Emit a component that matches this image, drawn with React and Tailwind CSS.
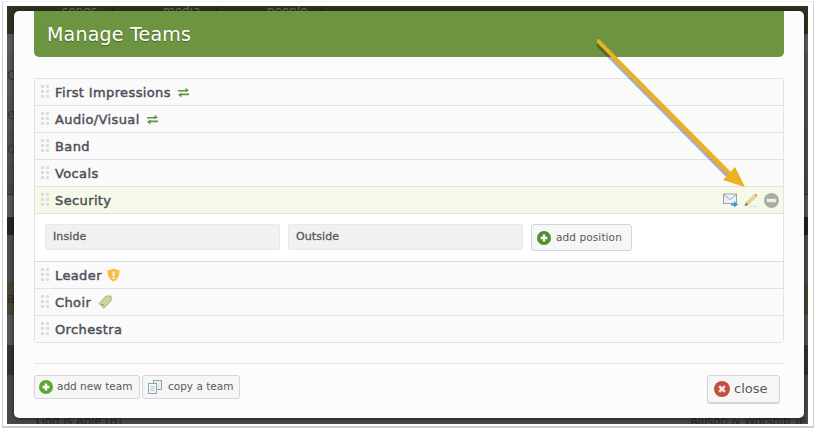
import React from "react";

const font = { fontFamily: '"DejaVu Sans", sans-serif' };

function Grip() {
  return (
    <svg width="8" height="14" viewBox="0 0 8 14" className="shrink-0">
      {[0, 5, 10].map((y) => (
        <g key={y} fill="#dcdfe1">
          <rect x="0" y={y} width="3" height="3" />
          <rect x="5" y={y} width="3" height="3" />
        </g>
      ))}
    </svg>
  );
}

function Swap() {
  return (
    <svg width="11" height="11" viewBox="0 0 11 11" fill="none" className="ml-[7px]">
      <path d="M0 3h7.5V0.8L11 3.6 7.5 5.2V4.6H0Z" fill="#5f9440" />
      <path d="M11 6.6H3.5V5.4L0 7.8l3.5 2.6V8.2H11Z" fill="#5f9440" />
    </svg>
  );
}

function Shield() {
  return (
    <svg width="13" height="14" viewBox="0 0 13 14" className="ml-[5px]">
      <path d="M6.5 0.5C8.5 1.8 10.5 2 12.5 2C12.8 7.5 11 11.5 6.5 13.5C2 11.5 0.2 7.5 0.5 2C2.5 2 4.5 1.8 6.5 0.5Z" fill="#f8bd45" />
      <rect x="5.7" y="3.5" width="1.7" height="5" fill="#fff" />
      <rect x="5.7" y="9.3" width="1.7" height="1.7" fill="#fff" />
    </svg>
  );
}

function Tag() {
  return (
    <svg width="14" height="14" viewBox="0 0 14 14" className="ml-[7px]">
      <path d="M1 8.5L8 1.2L13 1L13 6L5.8 13.2Z" fill="#c9d89b" stroke="#a0b279" strokeWidth="1" strokeLinejoin="round" />
      <circle cx="4.6" cy="9.6" r="0.8" fill="#6f8350" />
    </svg>
  );
}

function PlusIcon({ color = "#5da82b", size = 14 }) {
  return (
    <svg width={size} height={size} viewBox="0 0 14 14" className="shrink-0">
      <circle cx="7" cy="7" r="7" fill={color} />
      <path d="M7 3.6v6.8M3.6 7h6.8" stroke="#fff" strokeWidth="2.4" />
    </svg>
  );
}

function CopyIcon() {
  return (
    <svg width="14" height="14" viewBox="0 0 14 14" fill="none" className="shrink-0">
      <rect x="5.5" y="0.5" width="8" height="9" fill="#e8eef0" stroke="#8ea6ad" />
      <rect x="0.5" y="3.5" width="8" height="10" fill="#f4f7f8" stroke="#8ea6ad" />
      <path d="M2.5 6.5h4M2.5 8.5h4M2.5 10.5h4" stroke="#b5c5ca" />
    </svg>
  );
}

function MailIcon() {
  return (
    <svg width="15" height="15" viewBox="0 0 15 15" className="shrink-0">
      <rect x="0.5" y="1" width="13" height="9.5" fill="#eef0f3" stroke="#9aa3ad" />
      <path d="M0.5 1.5L7 6.5L13.5 1.5" fill="none" stroke="#9aa3ad" />
      <path d="M8 10.5h3V8l4 3.5-4 3v-2H8Z" fill="#3f97dc" />
    </svg>
  );
}

function PencilIcon() {
  return (
    <svg width="14" height="14" viewBox="0 0 14 14" className="shrink-0">
      <path d="M0.8 13L2 9.6L10.4 1.4L12.6 3.6L4.3 11.8Z" fill="#ecd38b" stroke="#cdb26a" strokeWidth="0.5" />
      <path d="M10.4 1.4L11.4 0.5L13.5 2.6L12.6 3.6Z" fill="#e58a80" />
      <path d="M0.8 13L2 9.6L4.3 11.8Z" fill="#8b7a5c" />
      <path d="M4 13.5h9" stroke="#dfe3cf" />
    </svg>
  );
}

function MinusIcon() {
  return (
    <svg width="15" height="15" viewBox="0 0 15 15" className="shrink-0">
      <circle cx="7.5" cy="7.5" r="7.5" fill="#a9aca3" />
      <rect x="2.8" y="5.8" width="9.4" height="3.4" fill="#eceee8" />
    </svg>
  );
}

function CloseIcon() {
  return (
    <svg width="16" height="16" viewBox="0 0 16 16" className="shrink-0">
      <circle cx="8" cy="8" r="8" fill="#c2503f" />
      <path d="M5.2 5.2l5.6 5.6M10.8 5.2l-5.6 5.6" stroke="#f6e3df" strokeWidth="2.6" />
    </svg>
  );
}

function Row({ name, icon, active, children }) {
  return (
    <div
      className={`flex h-[27px] items-center border-b border-[#dfe3e6] pl-[6px] pr-[4px] last:h-[26px] last:border-b-0 ${
        active ? "bg-[#f4f9e8]" : "bg-[#fafafa]"
      }`}
    >
      <Grip />
      <span className="ml-[6px] translate-y-[0.5px] text-[13px] tracking-[0.38px] text-[#4d5059] [-webkit-text-stroke:0.45px_#4d5059]">
        {name}
      </span>
      {icon}
      {children}
    </div>
  );
}

function Button({ icon, label, className = "" }) {
  return (
    <button
      className={`flex items-center whitespace-nowrap rounded-[3px] border border-[#d3d5d6] bg-[#f6f6f6] text-[#555a60] ${className}`}
    >
      {icon}
      <span>{label}</span>
    </button>
  );
}

function Cell({ text, className = "" }) {
  return (
    <div className={`flex items-start border-r border-[#1f2417] ${className}`}>
      <span className="-mt-[5px] text-[12px] leading-[20px] text-[#6d7263]">{text}</span>
    </div>
  );
}

function PositionBox({ label }) {
  return (
    <div className="flex h-[26px] w-[235px] items-center rounded-[2px] border border-[#e8e8e8] bg-[#f1f1f1] pl-[7px] text-[11px] tracking-[0.1px] text-[#55585c] [-webkit-text-stroke:0.3px_#55585c]">
      {label}
    </div>
  );
}

export default function App() {
  return (
    <div className="h-[432px] w-[816px] overflow-hidden bg-white" style={font}>
      <div className="ml-[2px] mt-[1px] h-[427px] w-[812px] border border-b-[2px] border-[#cfcfcf] border-t-[#f0f0f0] pl-[4px] pt-[4px]">
        <div className="relative h-[418px] w-[801px] overflow-hidden bg-[#4b4b4b]">
          {/* dimmed page behind the dialog */}
          <div className="flex h-[28px] overflow-hidden bg-[#2e3421]">
            <Cell text="songs" className="w-[106px] pl-[55px]" />
            <Cell text="media" className="w-[104px] pl-[50px]" />
            <Cell text="people" className="w-[105px] pl-[50px]" />
          </div>
          <div className="flex h-[20px] bg-[#5c5c5c]" />
          <div className="flex h-[43px] items-center bg-[#565656] text-[14px] text-[#3a3a3a]">Ce</div>
          <div className="flex h-[34px] items-center bg-[#525252] text-[14px] text-[#3a3a3a]">ep</div>
          <div className="flex h-[34px] items-center bg-[#4f4f4f] text-[14px] text-[#3a3a3a]">oc</div>
          <div className="h-[18px] bg-[#4c4c4c]" />
          <div className="h-[12px] border-b border-[#333] bg-[#474747]" />
          <div className="h-[22px] bg-[#585858]" />
          <div className="h-[18px] bg-[#242424]" />
          <div className="h-[47px] bg-[#4e4e4e]" />
          <div className="flex h-[33px] items-center bg-[#4a4636] text-[14px] text-[#2f2c20]">a</div>
          <div className="h-[30px] bg-[#565656]" />
          <div className="h-[30px] bg-[#333333]" />
          <div className="flex h-[49px] items-end justify-between bg-[#4a4a4a] pl-[29px] pr-[2px] text-[11.5px] leading-[6px] text-[#24272e]">
            <span className="font-medium">God Is Able [B]</span>
            <span>Allison &amp; Worship Te</span>
          </div>

          {/* dialog */}
          <div className="absolute left-[7px] top-[5px] flex h-[407px] w-[790px] flex-col rounded-[5px] bg-[#fcfcfc] px-[20px] shadow-[0_1px_5px_rgba(0,0,0,0.6)]">
            <div className="flex h-[46px] shrink-0 items-center rounded-b-[5px] bg-[#6d9440] pl-[13px] text-[19px] tracking-[0.2px] text-white [text-shadow:0_1px_1px_rgba(0,0,0,0.35)]">
              Manage Teams
            </div>

            <div className="mt-[21px] rounded-[3px] border border-[#dfe3e6] bg-[#fafafa]">
              <Row name="First Impressions" icon={<Swap />} />
              <Row name="Audio/Visual" icon={<Swap />} />
              <Row name="Band" />
              <Row name="Vocals" />
              <Row name="Security" active>
                <div className="ml-auto flex items-center gap-[6px]">
                  <MailIcon />
                  <PencilIcon />
                  <MinusIcon />
                </div>
              </Row>
              <div className="flex h-[48px] items-start gap-[8px] border-b border-[#d5dce2] bg-white pl-[10px] pt-[10px]">
                <PositionBox label="Inside" />
                <PositionBox label="Outside" />
                <Button
                  icon={<PlusIcon color="#4f8f2c" />}
                  label="add position"
                  className="h-[27px] w-[101px] gap-[5px] pl-[5px] text-[10.5px] tracking-[0.1px]"
                />
              </div>
              <Row name="Leader" icon={<Shield />} />
              <Row name="Choir" icon={<Tag />} />
              <Row name="Orchestra" />
            </div>

            <div className="mt-[20px] border-t border-[#e4e4e4] pt-[11px]">
              <div className="flex items-start">
                <Button
                  icon={<PlusIcon />}
                  label="add new team"
                  className="h-[24px] w-[106px] gap-[4px] pl-[4px] text-[10.5px]"
                />
                <Button
                  icon={<CopyIcon />}
                  label="copy a team"
                  className="ml-[2px] h-[24px] w-[98px] gap-[6px] pl-[5px] text-[10.5px]"
                />
                <Button
                  icon={<CloseIcon />}
                  label="close"
                  className="ml-auto mr-[4px] h-[28px] w-[73px] gap-[4px] pl-[6px] text-[13px] font-medium shadow-[0_1px_1px_rgba(0,0,0,0.15)]"
                />
              </div>
            </div>
          </div>

          {/* annotation arrow */}
          <svg className="absolute left-[590px] top-[32px]" width="160" height="156" viewBox="0 0 160 156">
            <path d="M1 3L132 135" stroke="rgba(0,0,0,0.3)" strokeWidth="4" transform="translate(-1 3)" />
            <path d="M1 3L132 135" stroke="#ebb120" strokeWidth="4" strokeLinecap="round" />
            <path d="M148 149L126 142L138 129Z" fill="#ebb120" />
          </svg>
        </div>
      </div>
    </div>
  );
}
